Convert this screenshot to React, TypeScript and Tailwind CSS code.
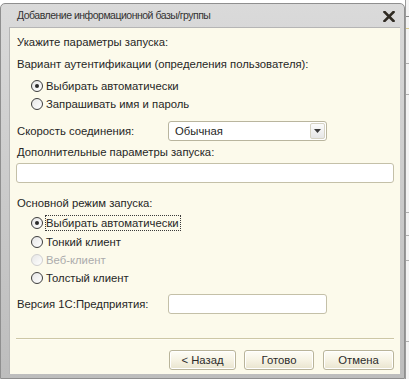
import React from "react";

function Radio({ checked = false, disabled = false }: { checked?: boolean; disabled?: boolean }) {
  return (
    <span
      className={
        "relative inline-flex items-center justify-center w-[12px] h-[12px] rounded-full border bg-gradient-to-br from-[#e6e6e6] to-white " +
        (disabled ? "border-[#d0d0d0]" : "border-[#3c3c3c]")
      }
    >
      {checked && <span className="w-[4px] h-[4px] rounded-full bg-[#2a2a2a]" />}
    </span>
  );
}

function RadioRow({
  label,
  checked,
  disabled,
  focused,
  mt,
}: {
  label: string;
  checked?: boolean;
  disabled?: boolean;
  focused?: boolean;
  mt: string;
}) {
  return (
    <div className={"flex items-center h-[18px] pl-[14px] " + mt}>
      <Radio checked={checked} disabled={disabled} />
      <span
        className={
          "ml-[2px] leading-[14px] pr-[1px] " +
          (disabled ? "text-[#ababab] " : "text-[#262626] ") +
          (focused ? "border border-dotted border-[#3a3a3a]" : "border border-transparent")
        }
      >
        {label}
      </span>
    </div>
  );
}

function Btn({ label, w }: { label: string; w: string }) {
  return (
    <div
      className={
        "h-[20px] flex items-center justify-center rounded-[3px] border border-[#b9b49a] bg-gradient-to-b from-[#fefdf7] via-[#f6f3e4] to-[#e9e4cf] text-[#2b2b2b] shadow-[inset_0_0_0_1px_#ffffff] " +
        w
      }
    >
      {label}
    </div>
  );
}

export default function App() {
  return (
    <div
      className="w-[409px] h-[379px] bg-white flex overflow-hidden text-[11.3px] text-[#262626]"
      style={{ fontFamily: "'Liberation Sans', Arial, sans-serif" }}
    >
      {/* window */}
      <div className="mt-[3px] w-[405px] h-[376px] flex flex-col rounded-tl-[5px] rounded-tr-[5px] border border-[#8f8f8f] bg-gradient-to-b from-[#dadada] via-[#cbcbcb] to-[#bdbdbd]">
        {/* title */}
        <div className="h-[23px] flex items-center pl-[16px] pr-[8px]">
          <span className="text-[#333] flex-1 pt-[1px] text-[10.5px] tracking-[-0.5px]">
            Добавление информационной базы/группы
          </span>
          <svg width="12" height="11" viewBox="0 0 12 11" className="mr-[1px] mt-[2px]">
            <path d="M1.5 1 L10.5 10 M10.5 1 L1.5 10" stroke="#2f2a22" strokeWidth="2.6" strokeLinecap="square" />
          </svg>
        </div>
        {/* content */}
        <div className="ml-[8px] mr-[4px] mb-[4px] flex-1 bg-[#fcfaeb] border-t border-l border-[#b5b5b5] flex flex-col pl-[7px] pr-[5px]">
          <div className="mt-[5px] h-[18px] flex items-center">Укажите параметры запуска:</div>
          <div className="mt-[4px] h-[18px] flex items-center">Вариант аутентификации (определения пользователя):</div>
          <RadioRow mt="mt-[4px]" label="Выбирать автоматически" checked />
          <RadioRow mt="mt-[0px]" label="Запрашивать имя и пароль" />
          <div className="mt-[8px] h-[20px] flex items-center">
            <span className="w-[151px]">Скорость соединения:</span>
            <div className="w-[159px] h-[20px] rounded-[3px] border border-[#b9b59e] bg-white flex items-center">
              <span className="flex-1 pl-[6px] text-[#1f1f1f]">Обычная</span>
              <div className="w-[15px] h-[16px] mr-[1px] rounded-[2px] border border-[#d6d3c4] bg-gradient-to-b from-[#fbfbfb] to-[#e6e6e6] flex items-center justify-center">
                <svg width="7" height="4" viewBox="0 0 7 4">
                  <path d="M0 0 H7 L3.5 4 Z" fill="#3a3a3a" />
                </svg>
              </div>
            </div>
          </div>
          <div className="mt-[2px] h-[18px] flex items-center">Дополнительные параметры запуска:</div>
          <div className="mt-[2px] h-[20px] mr-[1px] -ml-[1px] rounded-[3px] border border-[#c4c0a8] bg-white" />
          <div className="mt-[11px] h-[18px] flex items-center">Основной режим запуска:</div>
          <RadioRow mt="mt-[2px]" label="Выбирать автоматически" checked focused />
          <RadioRow mt="mt-[1px]" label="Тонкий клиент" />
          <RadioRow mt="mt-[0px]" label="Веб-клиент" disabled />
          <RadioRow mt="mt-[0px]" label="Толстый клиент" />
          <div className="mt-[7px] h-[20px] flex items-center">
            <span className="w-[151px]">Версия 1С:Предприятия:</span>
            <div className="w-[159px] h-[20px] rounded-[3px] border border-[#c4c0a8] bg-white" />
          </div>
          <div className="mt-[24px] mr-[1px] -ml-[1px] h-[2px] border-t border-[#cdc7a6] border-b-[#fffdf4] border-b" />
          <div className="mt-[10px] flex justify-end mr-[1px]">
            <Btn label="< Назад" w="w-[67px]" />
            <div className="w-[8px]" />
            <Btn label="Готово" w="w-[70px]" />
            <div className="w-[9px]" />
            <Btn label="Отмена" w="w-[71px]" />
          </div>
        </div>
      </div>
      {/* neighbour window strip */}
      <div className="flex-1 flex flex-col bg-[#f4f4f4] border-l border-[#9a9a9a]">
        <div className="mt-[16px] h-[1px] bg-[#8a8a8a]" />
        <div className="mt-[11px] h-[1px] bg-[#d8c98a]" />
        <div className="mt-[34px] h-[1px] bg-[#b0b0b0]" />
        <div className="mt-[30px] h-[1px] bg-[#b0b0b0]" />
        <div className="mt-[117px] h-[1px] bg-[#b0b0b0]" />
        <div className="mt-[22px] h-[1px] bg-[#b0b0b0]" />
        <div className="mt-[24px] h-[1px] bg-[#b0b0b0]" />
        <div className="mt-[80px] h-[1px] bg-[#b0b0b0]" />
      </div>
    </div>
  );
}
